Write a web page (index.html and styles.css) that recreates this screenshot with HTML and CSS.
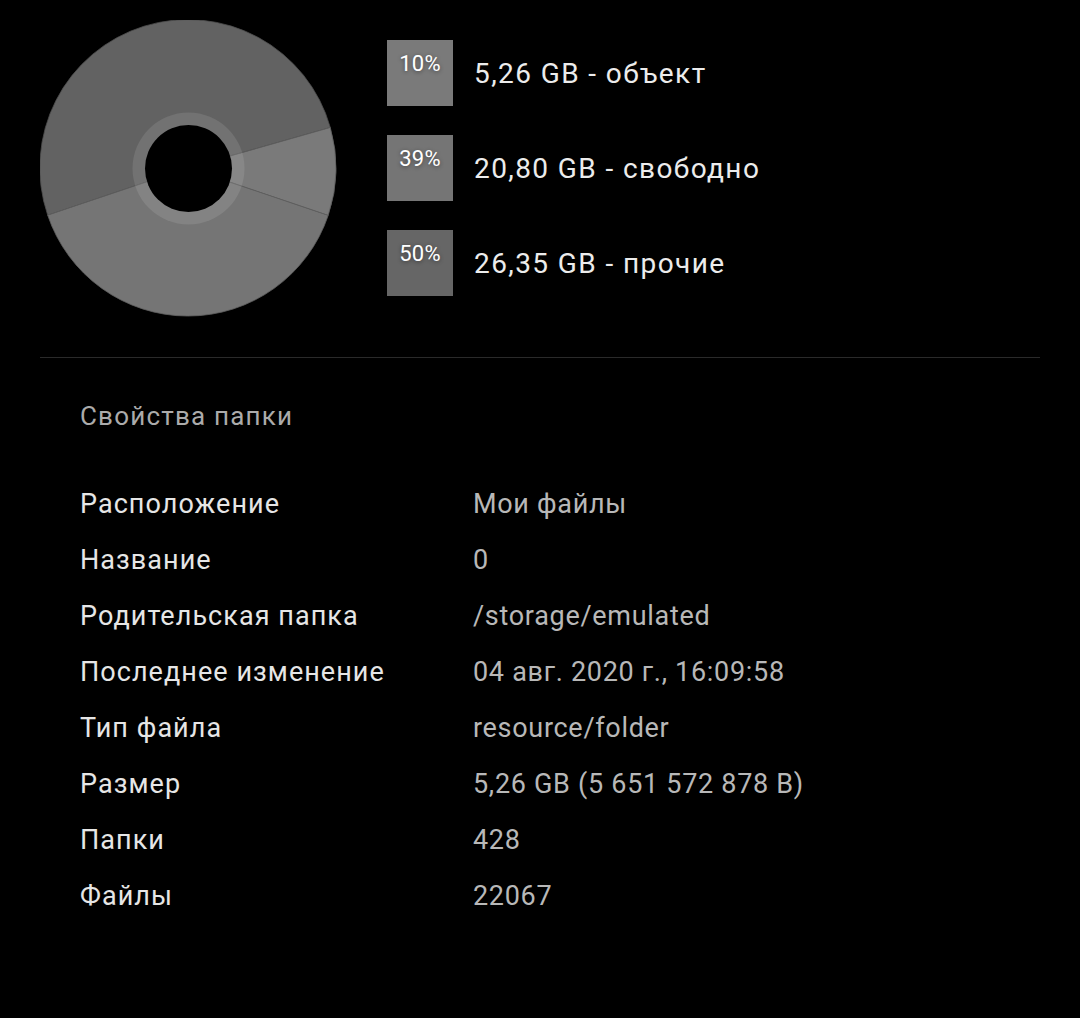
FILE: index.html
```html
<!DOCTYPE html>
<html lang="ru">
<head>
<meta charset="utf-8">
<title>Свойства папки</title>
<link rel="stylesheet" href="styles.css">
</head>
<body>
<div class="top">
  <svg class="donut" width="297" height="297" viewBox="40 20 297 297">
    <path d="M188 168 L47.7 215.2 A148 148 0 1 1 330.3 127.5 Z" fill="#626262" stroke="#4e4e4e" stroke-width="0.8"/>
    <path d="M188 168 L330.3 127.5 A148 148 0 0 1 328.2 215.4 Z" fill="#7a7a7a" stroke="#5e5e5e" stroke-width="0.8"/>
    <path d="M188 168 L328.2 215.4 A148 148 0 0 1 47.7 215.2 Z" fill="#757575" stroke="#5e5e5e" stroke-width="0.8"/>
    <circle cx="188.5" cy="168.5" r="56" fill="#ffffff" fill-opacity="0.1"/>
    <circle cx="188.5" cy="168.5" r="43.5" fill="#000"/>
  </svg>
  <ul class="legend">
    <li class="legend-item">
      <span class="swatch swatch-obj">10%</span>
      <span class="legend-label">5,26 GB - объект</span>
    </li>
    <li class="legend-item">
      <span class="swatch swatch-free">39%</span>
      <span class="legend-label">20,80 GB - свободно</span>
    </li>
    <li class="legend-item">
      <span class="swatch swatch-other">50%</span>
      <span class="legend-label">26,35 GB - прочие</span>
    </li>
  </ul>
</div>
<div class="divider"></div>
<section class="props">
  <h2 class="props-title">Свойства папки</h2>
  <dl class="props-list">
    <dt>Расположение</dt><dd>Мои файлы</dd>
    <dt>Название</dt><dd>0</dd>
    <dt>Родительская папка</dt><dd>/storage/emulated</dd>
    <dt>Последнее изменение</dt><dd>04 авг. 2020 г., 16:09:58</dd>
    <dt>Тип файла</dt><dd>resource/folder</dd>
    <dt>Размер</dt><dd>5,26 GB (5 651 572 878 B)</dd>
    <dt>Папки</dt><dd>428</dd>
    <dt>Файлы</dt><dd>22067</dd>
  </dl>
</section>
</body>
</html>
```
FILE: styles.css
```css
html, body {
  margin: 0;
  padding: 0;
  background: #000;
}
body {
  font-family: Roboto, "Noto Sans", sans-serif;
  color: #e8e8e8;
  width: 1080px;
  height: 1018px;
  overflow: hidden;
}
.top {
  display: flex;
  align-items: flex-start;
  padding: 20px 40px 0;
}
.donut {
  display: block;
  flex: none;
}
.legend {
  list-style: none;
  margin: 20px 0 0 50px;
  padding: 0;
  display: flex;
  flex-direction: column;
  gap: 29px;
}
.legend-item {
  display: flex;
  align-items: center;
  height: 66px;
}
.swatch {
  width: 66px;
  height: 66px;
  box-sizing: border-box;
  padding-top: 12px;
  text-align: center;
  font-size: 22px;
  line-height: 24px;
  letter-spacing: 0.3px;
  color: #fff;
  text-shadow: 0 1px 4px rgba(0,0,0,0.45);
  flex: none;
}
.swatch-obj { background: #7a7a7a; }
.swatch-free { background: #757575; }
.swatch-other { background: #666666; }
.legend-label {
  margin-left: 21px;
  font-size: 28px;
  letter-spacing: 1.4px;
  color: #ececec;
}
.divider {
  margin: 40px 40px 0;
  height: 1px;
  background: #2a2a2a;
}
.props {
  padding-left: 80px;
}
.props-title {
  margin: 42px 0 0;
  font-weight: 400;
  font-size: 26px;
  line-height: 32px;
  letter-spacing: 1.2px;
  color: #ababab;
}
.props-list {
  margin: 44px 0 0;
  display: grid;
  grid-template-columns: 393px 1fr;
  grid-auto-rows: 56px;
  align-items: center;
  font-size: 27px;
}
.props-list dt {
  color: #e6e6e6;
  letter-spacing: 1.05px;
}
.props-list dd {
  margin: 0;
  color: #b8b8b8;
  letter-spacing: 0.7px;
}
```
